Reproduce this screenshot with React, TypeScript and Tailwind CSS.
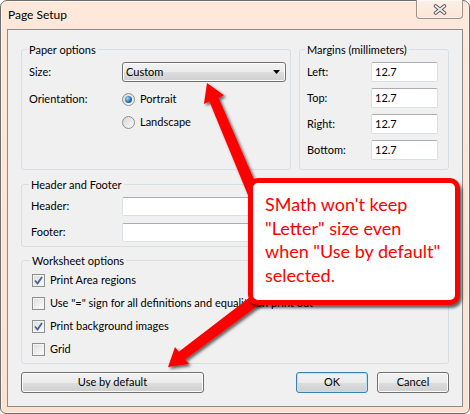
import React from "react";

const ui = "font-['Lato','Liberation_Sans',sans-serif]";

function GroupBox({
  title,
  className,
  children,
}: {
  title: string;
  className?: string;
  children: React.ReactNode;
}) {
  return (
    <fieldset className={`rounded-[3px] border border-[#d5dfe5] ${className ?? ""}`}>
      <legend className="-ml-[2px] px-[2px] text-[11px] leading-[15px]">{title}</legend>
      {children}
    </fieldset>
  );
}

function TextBox({ value, className }: { value?: string; className?: string }) {
  return (
    <div
      className={`flex items-center rounded-[2px] border border-[#dbdfe6] border-t-[#abadb3] bg-white pl-[3px] text-[11px] ${className ?? ""}`}
    >
      {value}
    </div>
  );
}

function Radio({ checked, label }: { checked?: boolean; label: string }) {
  return (
    <div className="flex h-[23px] items-center gap-[5px]">
      <span className="flex h-[13px] w-[13px] items-center justify-center rounded-full border border-[#8e8f8f] bg-[linear-gradient(135deg,#d6d6d6,#fbfbfb)]">
        {checked && (
          <span className="h-[7px] w-[7px] rounded-full bg-[radial-gradient(circle_at_35%_35%,#9fd8f8,#2a73b5_55%,#0f3d6e)]" />
        )}
      </span>
      <span>{label}</span>
    </div>
  );
}

function Check({ checked, label }: { checked?: boolean; label: string }) {
  return (
    <div className="flex h-[23px] items-center gap-[5px] whitespace-nowrap">
      <span className="flex h-[13px] w-[13px] shrink-0 items-center justify-center border border-[#8e8f8f] bg-[linear-gradient(135deg,#dcdcdc,#fdfdfd)] shadow-[inset_0_0_0_1px_#f4f4f4]">
        {checked && (
          <svg width="11" height="11" viewBox="0 0 11 11">
            <path d="M2 5.5 L4.5 8.5 L9 2" fill="none" stroke="#4a5f97" strokeWidth="1.8" />
          </svg>
        )}
      </span>
      <span>{label}</span>
    </div>
  );
}

function Button({ label, primary, className }: { label: string; primary?: boolean; className?: string }) {
  return (
    <button
      className={`flex h-[21px] items-center justify-center rounded-[3px] border text-[11px] bg-[linear-gradient(#f2f2f2_0%,#ebebeb_50%,#dddddd_51%,#cfcfcf_100%)] ${
        primary
          ? "border-[#3c7fb1] shadow-[inset_0_0_0_1px_#b7e3f7]"
          : "border-[#707070] shadow-[inset_0_0_0_1px_#fcfcfc]"
      } ${className ?? ""}`}
    >
      {label}
    </button>
  );
}

export default function App() {
  return (
    <div className={`relative h-[414px] w-[470px] bg-white text-black ${ui}`}>
      {/* window frame */}
      <div className="flex h-[414px] w-[470px] flex-col rounded-t-[7px] rounded-b-[6px] border border-[#6e6e6e] bg-[linear-gradient(180deg,#fde8da,#fbe1d0)] px-[6px] pb-[6px] shadow-[inset_0_0_0_1px_rgba(255,255,255,0.55)]">
        {/* title bar */}
        <div className="flex h-[28px] items-start justify-between">
          <span className="pl-[1px] pt-[6px] text-[12px] leading-[16px]">Page Setup</span>
          <div className="-mt-[1px] flex h-[19px] w-[47px] items-center justify-center rounded-b-[4px] border border-t-0 border-[#a08f86] bg-[linear-gradient(180deg,#fdf0e8,#fbe4d6)] shadow-[inset_0_0_0_1px_rgba(255,255,255,0.6)]">
            <svg width="14" height="11" viewBox="0 0 14 11">
              <path d="M2.5 2 L11.5 9 M11.5 2 L2.5 9" stroke="#5b5b5b" strokeWidth="3.6" strokeLinecap="round" />
              <path d="M2.5 2 L11.5 9 M11.5 2 L2.5 9" stroke="#e9e9e9" strokeWidth="1.8" strokeLinecap="round" />
            </svg>
          </div>
        </div>

        {/* client area */}
        <div className="flex flex-1 flex-col border border-[#8c8c8c] bg-[#f0f0f0] px-[13px] pt-[12px] text-[11px]">
          <div className="flex gap-[8px]">
            <GroupBox title="Paper options" className="h-[128px] w-[270px] pl-[7px]">
              <div className="mt-[5px] flex h-[20px] items-center">
                <span className="w-[93px]">Size:</span>
                <div className="flex h-[20px] w-[164px] items-center justify-between rounded-[3px] border border-[#707070] bg-[linear-gradient(#f2f2f2_0%,#ebebeb_50%,#dddddd_51%,#cfcfcf_100%)] pl-[3px] pr-[5px] shadow-[inset_0_0_0_1px_#fcfcfc]">
                  <span>Custom</span>
                  <svg width="7" height="4" viewBox="0 0 7 4">
                    <path d="M0 0 H7 L3.5 4 Z" fill="#000" />
                  </svg>
                </div>
              </div>
              <div className="mt-[6px] flex">
                <span className="flex h-[23px] w-[93px] items-center">Orientation:</span>
                <div className="flex flex-col">
                  <Radio checked label="Portrait" />
                  <Radio label="Landscape" />
                </div>
              </div>
            </GroupBox>

            <GroupBox title="Margins (millimeters)" className="h-[128px] flex-1 pl-[7px]">
              <div className="mt-[5px] flex flex-col gap-[6px]">
                {["Left:", "Top:", "Right:", "Bottom:"].map((m) => (
                  <div key={m} className="flex h-[20px] items-center">
                    <span className="w-[64px]">{m}</span>
                    <TextBox value="12.7" className="h-[20px] w-[67px]" />
                  </div>
                ))}
              </div>
            </GroupBox>
          </div>

          <GroupBox title="Header and Footer" className="mt-[7px] h-[70px] pl-[9px]">
            <div className="mt-[5px] flex flex-col gap-[7px]">
              <div className="flex h-[19px] items-center">
                <span className="w-[91px]">Header:</span>
                <TextBox className="h-[19px] w-[316px]" />
              </div>
              <div className="flex h-[19px] items-center">
                <span className="w-[91px]">Footer:</span>
                <TextBox className="h-[19px] w-[316px]" />
              </div>
            </div>
          </GroupBox>

          <GroupBox title="Worksheet options" className="mt-[6px] h-[111px] pl-[10px]">
            <div className="mt-[1px] flex flex-col">
              <Check checked label="Print Area regions" />
              <Check label={'Use "=" sign for all definitions and equality on print out'} />
              <Check checked label="Print background images" />
              <Check label="Grid" />
            </div>
          </GroupBox>

          <div className="mt-[8px] flex">
            <Button label="Use by default" className="w-[183px]" />
            <Button label="OK" primary className="ml-auto w-[72px]" />
            <Button label="Cancel" className="ml-[9px] w-[72px]" />
          </div>
        </div>
      </div>

      {/* annotation arrows */}
      <svg className="pointer-events-none absolute left-0 top-0" width="470" height="414" viewBox="0 0 470 414">
        <defs>
          <filter id="arrowShadow" x="-20%" y="-20%" width="140%" height="140%">
            <feDropShadow dx="2" dy="2" stdDeviation="1.4" floodColor="#000" floodOpacity="0.6" />
          </filter>
        </defs>
        <g fill="#ff0000" filter="url(#arrowShadow)">
          <polygon points="207,83 224.1,95.3 218.6,97.7 261.5,196.7 250.5,201.3 209.4,101.5 203.9,103.9" />
          <polygon points="168,367 189,364.1 185.2,359.5 268.8,297.7 261.2,288.4 178.8,351.7 175,347.1" />
        </g>
      </svg>

      {/* callout */}
      <div className="absolute left-[248px] top-[178px] h-[127px] w-[212px] rounded-[10px] border-[5px] border-[#ff0000] bg-white pl-[12px] pt-[10px] text-[18px] leading-[23.5px] text-[#ff0000] shadow-[2px_3px_3px_rgba(0,0,0,0.6)]">
        SMath won't keep
        <br />
        "Letter" size even
        <br />
        when "Use by default"
        <br />
        selected.
      </div>
    </div>
  );
}
